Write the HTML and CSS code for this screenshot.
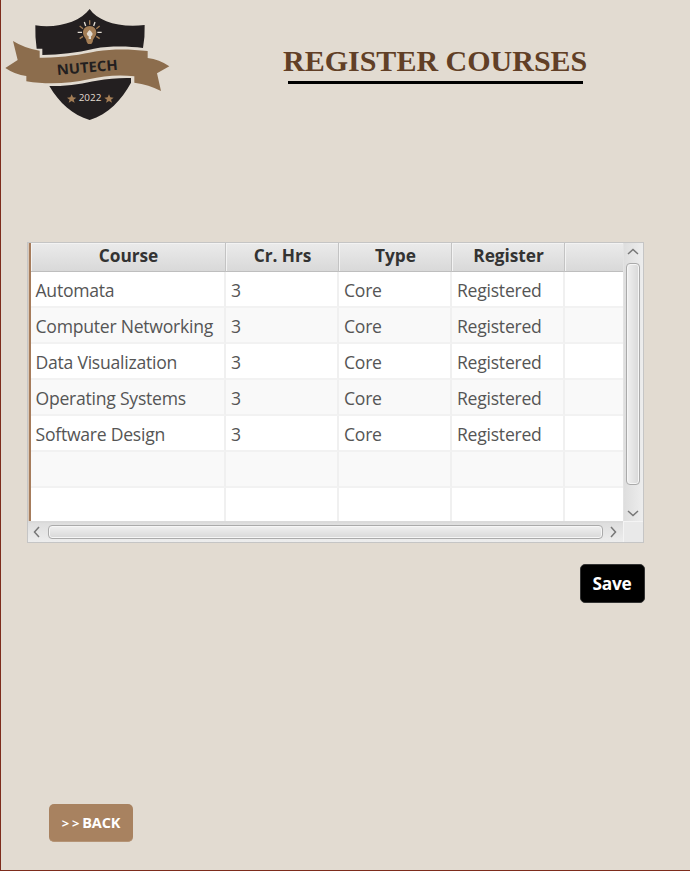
FILE: index.html
```html
<!DOCTYPE html>
<html lang="en">
<head>
<meta charset="utf-8">
<title>Register Courses</title>
<link rel="stylesheet" href="styles.css">
</head>
<body>
<main class="page">
  <header class="top">
    <svg class="logo" width="180" height="130" viewBox="0 0 540 390">
      <path fill="#231f20" d="M269 27C294 64 358 84 434 75Q435 112 429 144C385 139 335 137 282 146C230 158 180 164 127 165V146H110Q105 112 106 76C172 86 240 66 269 27Z"/>
      <path fill="#231f20" d="M148 258C205 260 250 249 290 242C325 236 360 233 393 234V248C365 300 325 342 269 360C218 345 178 309 148 258Z"/>
      <path fill="#8c6d4d" d="M39 123Q76 146 119 152V173C190 174 240 164 290 154C340 146 390 147 443 153V174Q478 178 508 199L471 220L483 273Q447 254 403 248V229C350 223 310 229 266 238C210 250 145 255 79 244V228Q45 224 16 204L53 180Z"/>
      <g stroke-width="4" stroke="#e2dbd1">
        <path d="M253 66l4 12M285 66l-4 12M233 97h13M292 97h13"/>
        <path stroke="#a37d55" d="M269 61v13M239 78l10 8M299 78l-10 8M239 116l10-7M299 116l-10-7"/>
      </g>
      <path fill="#a37d55" d="M269 78C256 78 249 87 249 98C249 109 259 113 260 126L264 132H274L278 126C279 113 289 109 289 98C289 87 282 78 269 78Z"/>
      <path fill="#e2dbd1" d="M269 90Q264 94 260 101Q262 108 266 109V117H273V109Q277 107 278 101Q274 94 269 90Z"/>
      <text class="logo-name" x="172" y="225" textLength="183" lengthAdjust="spacingAndGlyphs" transform="rotate(-5 172 225)">NUTECH</text>
      <text class="logo-year" x="236" y="304" textLength="68" lengthAdjust="spacingAndGlyphs">2022</text>
      <path id="star" fill="#a37d55" d="M215 283l4 9 10 1-8 6 3 9-9-5-9 5 3-9-8-6 10-1Z"/>
      <use href="#star" x="112"/>
    </svg>
    <h1 class="title"><span class="title-text">REGISTER COURSES</span></h1>
  </header>

  <section class="panel">
    <div class="view">
      <div class="row head"><span>Course</span><span>Cr. Hrs</span><span>Type</span><span>Register</span><span></span></div>
      <div class="row"><span>Automata</span><span>3</span><span>Core</span><span>Registered</span><span></span></div>
      <div class="row"><span>Computer Networking</span><span>3</span><span>Core</span><span>Registered</span><span></span></div>
      <div class="row"><span>Data Visualization</span><span>3</span><span>Core</span><span>Registered</span><span></span></div>
      <div class="row"><span>Operating Systems</span><span>3</span><span>Core</span><span>Registered</span><span></span></div>
      <div class="row"><span>Software Design</span><span>3</span><span>Core</span><span>Registered</span><span></span></div>
      <div class="row"><span></span><span></span><span></span><span></span><span></span></div>
      <div class="row"><span></span><span></span><span></span><span></span><span></span></div>
    </div>
    <div class="bar vertical">
      <svg width="12" height="7" viewBox="0 0 12 7"><path class="arrow" d="M1 6L6 1.5L11 6"/></svg>
      <i class="thumb"></i>
      <svg width="12" height="7" viewBox="0 0 12 7"><path class="arrow" d="M1 1L6 5.5L11 1"/></svg>
    </div>
    <div class="bar horizontal">
      <svg width="7" height="12" viewBox="0 0 7 12"><path class="arrow" d="M6 1L1.5 6L6 11"/></svg>
      <i class="thumb"></i>
      <svg width="7" height="12" viewBox="0 0 7 12"><path class="arrow" d="M1 1L5.5 6L1 11"/></svg>
    </div>
    <div class="corner"></div>
  </section>

  <button class="save">Save</button>
  <button class="back"><span class="chevrons">&gt;&gt;</span>BACK</button>
</main>
</body>
</html>
```
FILE: styles.css
```css
* { box-sizing: border-box; }
body { margin: 0; background: #e2dbd1; }
.page {
  display: flex;
  flex-direction: column;
  height: 871px;
  border-left: 1px solid #7d2c1c;
  border-bottom: 1px solid #7d2c1c;
  font-family: "Open Sans", "Noto Sans", sans-serif;
}
.top { display: flex; height: 242px; align-items: flex-start; }
.logo { display: block; margin-left: -1px; flex: none; }
.logo-name { font: 700 43px "Open Sans", sans-serif; fill: #231f20; }
.logo-year { font: 400 28px "Open Sans", sans-serif; fill: #e2dbd1; }
.title {
  width: 295px;
  height: 39px;
  margin: 45px 0 0 108px;
  border-bottom: 3px solid #000;
  font: 700 30px/32px "Liberation Serif", serif;
  color: #613f26;
  white-space: nowrap;
}
.title-text { display: block; margin-left: -5px; }
.panel {
  display: grid;
  grid-template-columns: 595px 20px;
  grid-template-rows: 278px 21px;
  flex: none;
  width: 617px;
  height: 301px;
  margin-left: 26px;
  border: 1px solid #c5c5c5;
  background: #e9e9e9;
}
.view {
  overflow: hidden;
  border-left: 1px solid #d9c8b8;
  background: #fff;
  box-shadow: inset 2px 0 #a67c5c;
  padding-left: 2px;
}
.row {
  display: grid;
  grid-template-columns: 195px 113px 113px 113px 59px;
  grid-template-rows: 36px;
  height: 36px;
  background: #fff;
  color: #555;
  font-size: 17.6px;
  line-height: 36px;
  letter-spacing: -0.25px;
}
.row span { padding-left: 5px; border-right: 2px solid #f0f0f0; border-bottom: 2px solid #f2f2f2; white-space: nowrap; }
.row span:first-child { padding-left: 4.5px; }
.row span:last-child { border-right: 0; }
.row:nth-child(odd) { background: #f9f9f9; }
.row.head {
  grid-template-rows: 29px;
  height: 29px;
  background: linear-gradient(#ebebeb, #d8d8d8);
  color: #333;
  font-size: 17.3px;
  font-weight: 700;
  line-height: 25px;
  letter-spacing: -0.05px;
  text-align: center;
}
.row.head span { padding: 0 0 0 1px; border-right: 1px solid #c3c3c3; border-bottom: 1px solid #bebebe; box-shadow: inset 1px 1px #f3f3f3; }
.row.head span:last-child { border-right: 0; }
.bar { display: flex; align-items: center; justify-content: space-between; }
.vertical { flex-direction: column; padding: 5px 2px 4px 0; border-left: 1px solid #e3e3e3; background: linear-gradient(90deg, #dedede, #ededed); }
.horizontal { padding: 0 6px 2px 5px; border-top: 2px solid #dadada; background: linear-gradient(#dedede, #ededed); }
.corner { background: #e9e9e9; border-top: 1px solid #f4f4f4; border-left: 1px solid #f4f4f4; }
.thumb { display: block; border: 1px solid #aaa; border-radius: 4px; box-shadow: inset 0 0 0 1px #f6f6f6; }
.vertical .thumb { width: 14px; height: 222px; margin-bottom: 18px; background: linear-gradient(90deg, #f0f0f0, #d8d8d8); }
.horizontal .thumb { width: 555px; height: 14px; background: linear-gradient(#f0f0f0, #d8d8d8); }
.arrow { fill: none; stroke: #777; stroke-width: 1.5; }
button { border: 0; padding: 0; flex: none; font-family: "Open Sans", sans-serif; font-weight: 700; color: #fff; }
.save {
  width: 65px;
  height: 39px;
  margin: 21px 0 0 578.5px;
  border: 1px solid #333;
  border-radius: 5px;
  background: #000;
  font-size: 17.3px;
  letter-spacing: -0.2px;
}
.back {
  width: 84px;
  height: 38px;
  margin: 201px 0 0 48px;
  border-bottom: 1px solid #b59476;
  border-radius: 5px;
  background: #a88260;
  font-size: 14.5px;
  letter-spacing: -0.1px;
}
.chevrons { font-size: 13px; letter-spacing: 2.8px; }
```
